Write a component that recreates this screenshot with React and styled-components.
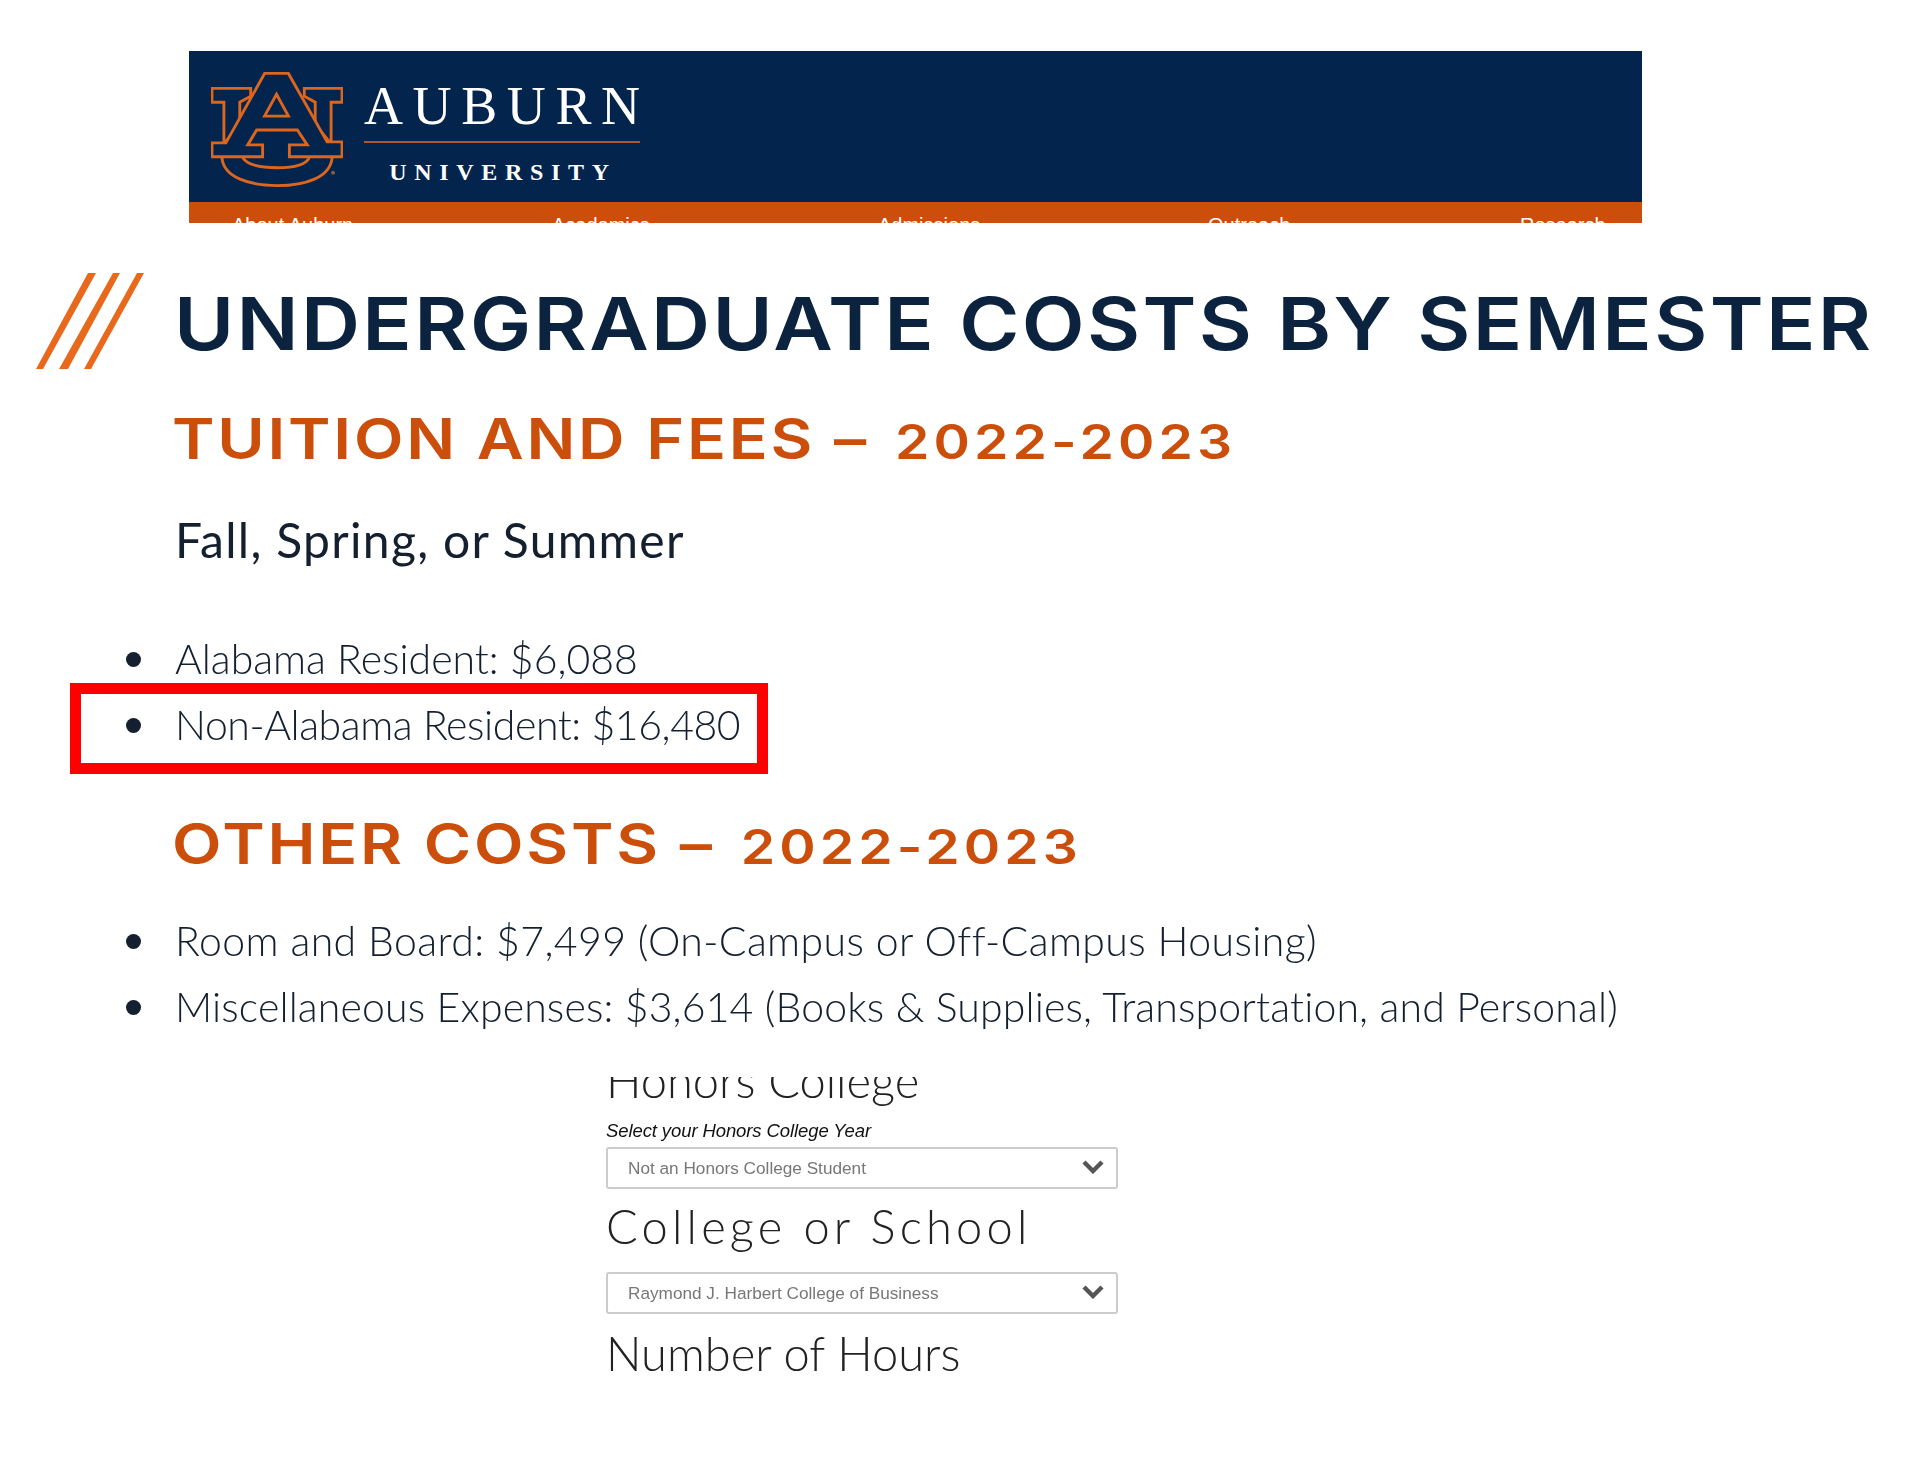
import React from 'react';
import styled, { createGlobalStyle } from 'styled-components';

const GlobalStyle = createGlobalStyle`
    html, body {
        margin: 0;
        padding: 0;
        background: #fff;
    }
`;

const Page = styled.div`
    width: 1922px;
    height: 1478px;
    overflow: hidden;
    padding-top: 51px;
    box-sizing: border-box;
    font-family: Lato, "Liberation Sans", sans-serif;
    filter: blur(0.6px);
`;

const Banner = styled.header`
    width: 1453px;
    margin-left: 189px;
`;

const BrandBar = styled.div`
    height: 151px;
    background: #03244d;
    display: flex;
    padding: 21px 0 0 22px;
    box-sizing: border-box;
    gap: 21px;
`;

const LogoMark = styled.svg`
    width: 132px;
    height: 116px;
    flex: none;
`;

const Wordmark = styled.div`
    width: 276px;
    color: #fff;
    font-family: "Liberation Serif", serif;
`;

const WordTop = styled.div`
    font-size: 54px;
    line-height: 50px;
    letter-spacing: 9.6px;
    white-space: nowrap;
    border-bottom: 2px solid #b0562a;
    padding: 9px 0 10px;
`;

const WordBottom = styled.div`
    font-size: 24px;
    line-height: 24px;
    font-weight: 700;
    letter-spacing: 7.7px;
    margin-top: 17px;
    padding-left: 2px;
    white-space: nowrap;
    text-align: center;
`;

const NavStrip = styled.nav`
    height: 21px;
    overflow: hidden;
    background: #cc4e0a;
    display: grid;
    grid-template-columns: 320px 326px 330px 312px auto;
    padding: 13px 0 0 43px;
    box-sizing: border-box;
    font-family: "Liberation Sans", sans-serif;
    font-size: 20px;
    line-height: 20px;
    color: #fff;
`;

const TitleRow = styled.div`
    display: flex;
    align-items: center;
    gap: 30px;
    margin: 50px 0 0 36px;
    height: 96px;
`;

const Slashes = styled.svg`
    width: 108px;
    height: 96px;
    flex: none;
`;

const Title = styled.h1`
    margin: 0;
    padding-top: 5px;
    font-family: Inter, sans-serif;
    font-size: 73px;
    line-height: 96px;
    font-weight: 600;
    color: #0c2340;
    letter-spacing: 2.1px;
    white-space: nowrap;
    transform: scaleX(1.12);
    transform-origin: left center;
`;

const Content = styled.main`
    padding-left: 172px;
`;

const SectionTitle = styled.h2`
    margin: ${props => props.$top}px 0 0;
    font-family: Inter, sans-serif;
    font-size: 56px;
    line-height: 64px;
    font-weight: 600;
    color: #cc4e0b;
    letter-spacing: 2.4px;
    white-space: nowrap;
    transform: scaleX(1.15);
    transform-origin: left center;
`;

const Year = styled.span`
    font-size: 48px;
    letter-spacing: 3.6px;
    margin-left: 6px;
`;

const Term = styled.h3`
    margin: 36px 0 0 3px;
    font-size: 48px;
    line-height: 60px;
    font-weight: 400;
    letter-spacing: 1.3px;
    color: #14202f;
    white-space: nowrap;
`;

const CostList = styled.ul`
    list-style: none;
    margin: ${props => props.$top}px 0 0 3px;
    padding: 0;
`;

const CostItem = styled.li`
    position: relative;
    height: 66px;
    font-size: 41px;
    line-height: 66px;
    font-weight: 300;
    letter-spacing: ${props => props.$track || 0}px;
    color: #14202f;
    white-space: nowrap;

    &::before {
        content: '';
        position: absolute;
        left: -49px;
        top: 26px;
        width: 15px;
        height: 15px;
        border-radius: 50%;
        background: #14202f;
    }
`;

const Highlight = styled.div`
    position: absolute;
    left: -105px;
    top: -9px;
    width: 698px;
    height: 91px;
    border: 11px solid #f00;
    box-sizing: border-box;
`;

const Calculator = styled.section`
    width: 512px;
    margin: 37px 0 0 606px;
`;

const CroppedTitle = styled.div`
    height: 35px;
    overflow: hidden;
    position: relative;
`;

const CroppedText = styled.div`
    position: absolute;
    left: 0;
    bottom: 4px;
    font-size: 47px;
    line-height: 56px;
    font-weight: 300;
    color: #222;
    white-space: nowrap;
`;

const FieldTitle = styled.div`
    font-size: 47px;
    line-height: 56px;
    font-weight: 300;
    letter-spacing: ${props => props.$track || 0}px;
    color: #222;
    white-space: nowrap;
    margin: ${props => props.$top}px 0 ${props => props.$bottom}px;
`;

const FieldHint = styled.div`
    font-family: "Liberation Sans", sans-serif;
    font-size: 18.5px;
    font-style: italic;
    line-height: 22px;
    color: #111;
    margin: 8px 0 5px;
    letter-spacing: -0.1px;
`;

const SelectBox = styled.div`
    height: 42px;
    border: 2px solid #ccc;
    border-radius: 3px;
    box-sizing: border-box;
    padding: 0 11px 0 20px;
    display: flex;
    align-items: center;
    justify-content: space-between;
    font-family: "Liberation Sans", sans-serif;
    font-size: 17.2px;
    color: #777;
`;

const Chevron = styled.svg`
    width: 24px;
    height: 15px;
    flex: none;
    margin-bottom: 4px;
`;

function Select({ value }) {
    return (
        <SelectBox>
            <span>{value}</span>
            <Chevron viewBox="0 0 24 15">
                <path d="M3 3 L12 12 L21 3" fill="none" stroke="#555" strokeWidth="4.4" />
            </Chevron>
        </SelectBox>
    );
}

export default function App() {
    return (
        <Page>
            <GlobalStyle />
            <Banner>
                <BrandBar>
                    <LogoMark viewBox="21 12 133 116">
                        <g fill="#03244d" stroke="#dd661f" strokeWidth="2.9" strokeLinejoin="miter">
                            <path d="M32 98 C34 118 60 126 88 126 C116 126 141 118 143 98" />
                            <path d="M53 98 C58 106 74 108 88 108 C102 108 116 106 120 98" />
                            <path d="M22 28 H61 V36 L50 42 V64 L34 84 V42 H22 Z" />
                            <path d="M153 28 H115 V36 L126 42 V64 L142 84 V42 H153 Z" />
                            <path d="M75 13 H99 L138 82 H153 V97 H100 V85 H118 L108 70 H67 L58 85 H73 V97 H22 V83 H36 Z" />
                            <path d="M87 34 L99 56 H75 Z" />
                        </g>
                        <circle cx="144" cy="113" r="2" fill="#8a5a3a" />
                    </LogoMark>
                    <Wordmark>
                        <WordTop>AUBURN</WordTop>
                        <WordBottom>UNIVERSITY</WordBottom>
                    </Wordmark>
                </BrandBar>
                <NavStrip>
                    <span>About Auburn</span>
                    <span>Academics</span>
                    <span>Admissions</span>
                    <span>Outreach</span>
                    <span>Research</span>
                </NavStrip>
            </Banner>

            <TitleRow>
                <Slashes viewBox="0 0 108 96">
                    <g fill="#e8691c">
                        <polygon points="52,0 60,0 7,96 0,96" />
                        <polygon points="77,0 84,0 32,96 23,96" />
                        <polygon points="101,0 108,0 55,96 48,96" />
                    </g>
                </Slashes>
                <Title>UNDERGRADUATE COSTS BY SEMESTER</Title>
            </TitleRow>

            <Content>
                <SectionTitle $top={38}>TUITION AND FEES – <Year>2022-2023</Year></SectionTitle>
                <Term>Fall, Spring, or Summer</Term>
                <CostList $top={56}>
                    <CostItem>Alabama Resident: $6,088</CostItem>
                    <CostItem $track={-0.42}>
                        Non-Alabama Resident: $16,480
                        <Highlight />
                    </CostItem>
                </CostList>
                <SectionTitle $top={54}>OTHER COSTS – <Year>2022-2023</Year></SectionTitle>
                <CostList $top={29}>
                    <CostItem $track={0.39}>Room and Board: $7,499 (On-Campus or Off-Campus Housing)</CostItem>
                    <CostItem $track={0.14}>Miscellaneous Expenses: $3,614 (Books &amp; Supplies, Transportation, and Personal)</CostItem>
                </CostList>
            </Content>

            <Calculator>
                <CroppedTitle>
                    <CroppedText>Honors College</CroppedText>
                </CroppedTitle>
                <FieldHint>Select your Honors College Year</FieldHint>
                <Select value="Not an Honors College Student" />
                <FieldTitle $top={9} $bottom={18} $track={4.2}>College or School</FieldTitle>
                <Select value="Raymond J. Harbert College of Business" />
                <FieldTitle $top={11} $bottom={0}>Number of Hours</FieldTitle>
            </Calculator>
        </Page>
    );
}
